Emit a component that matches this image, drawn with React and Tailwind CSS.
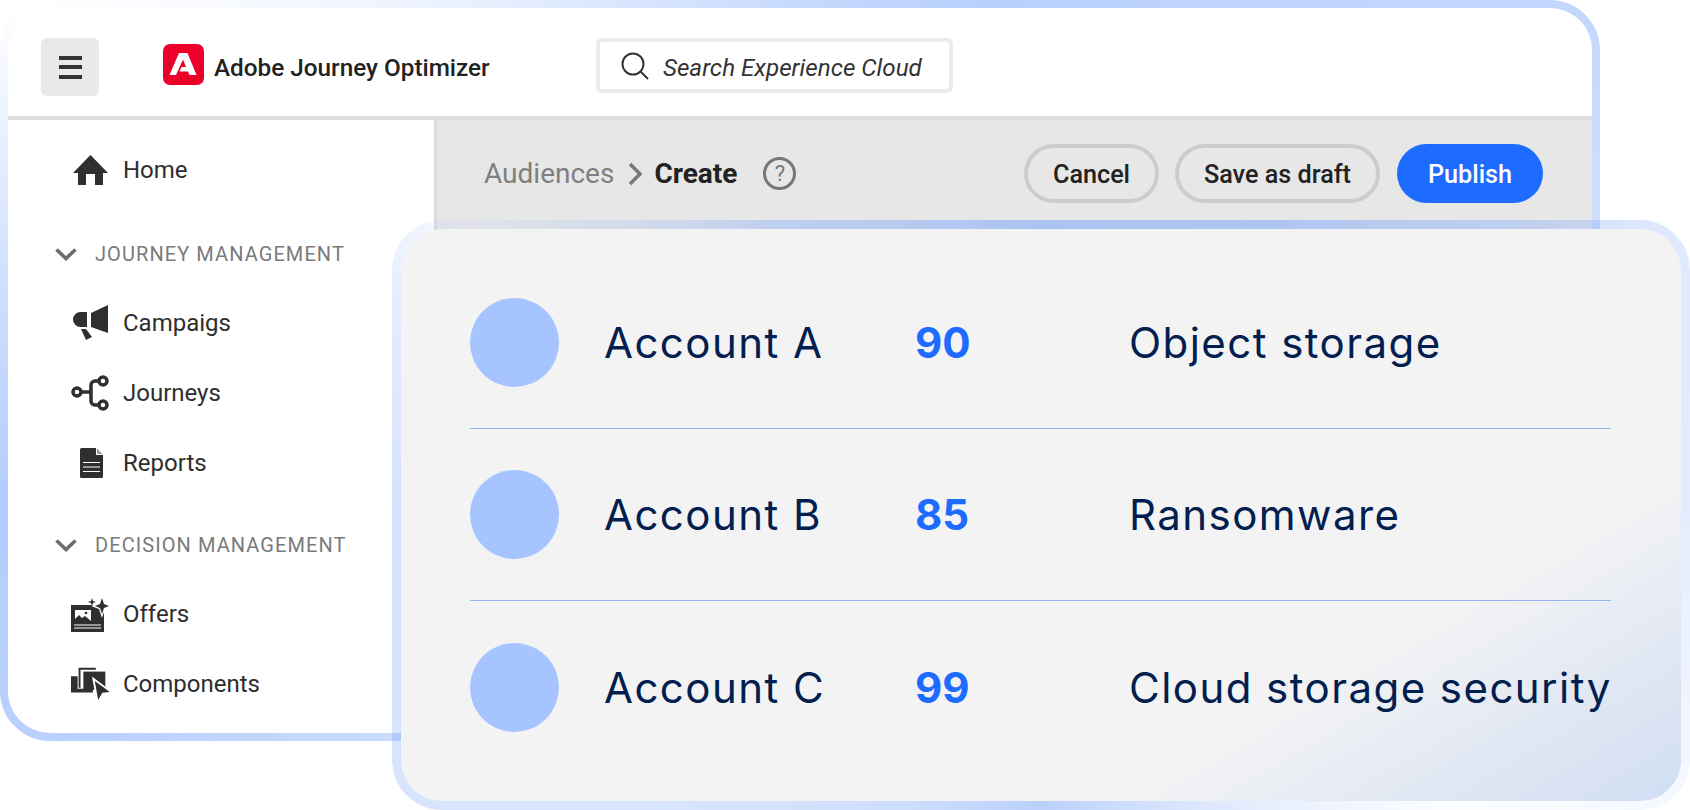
import React from "react";

const roboto = "font-['Roboto',sans-serif]";

const HomeIcon = () => (
  <svg width="36" height="30" viewBox="0 0 36 30" fill="#2f2f2f">
    <path d="M17.5 0L35 18H30V30H22V19H13V30H5V18H0Z" />
  </svg>
);

const CampaignIcon = () => (
  <svg width="38" height="38" viewBox="0 0 38 38" fill="#2f2f2f">
    <path d="M15 8H8.5A7.5 7.5 0 0 0 8.5 23H15Z" />
    <path d="M19 9L36 1V29L19 23Z" />
    <path d="M9 25H14L20 33L14 36Z" />
  </svg>
);

const JourneyIcon = () => (
  <svg width="40" height="38" viewBox="0 0 40 38" fill="none" stroke="#2f2f2f" strokeWidth="3.5">
    <circle cx="6" cy="18" r="4" />
    <circle cx="32" cy="7" r="4" />
    <circle cx="32" cy="31" r="4" />
    <path d="M10 18H20M28 7H24a4 4 0 0 0-4 4V27a4 4 0 0 0 4 4H28" />
  </svg>
);

const ReportIcon = () => (
  <svg width="23" height="30" viewBox="0 0 23 30">
    <path fill="#2f2f2f" d="M1.5 0H16V7H23V28.5A1.5 1.5 0 0 1 21.5 30H1.5A1.5 1.5 0 0 1 0 28.5V1.5A1.5 1.5 0 0 1 1.5 0Z" />
    <path fill="#9a9a9a" d="M17 0.5L22.5 6H17Z" />
    <path stroke="#fff" strokeWidth="1.2" d="M3 14.5H20M3 19H20M3 23.5H20" />
  </svg>
);

const OfferIcon = () => (
  <svg width="42" height="38" viewBox="0 0 42 38">
    <rect x="1" y="10" width="33" height="27" fill="#2f2f2f" />
    <rect x="5" y="15" width="16" height="12" fill="#fff" />
    <path fill="#2f2f2f" d="M5 27V24L9 20L12 23L15 21L21 26V27Z" />
    <circle cx="16" cy="18" r="1.3" fill="#2f2f2f" />
    <path stroke="#fff" strokeWidth="1.2" d="M4 30H31M4 33H31" />
    <path fill="#fff" d="M32 0L35 8L42 11L35 14L32 23L29 14L21 11L29 8Z" />
    <path fill="#2f2f2f" d="M32 3L34 9L39 11L34 13L32 19L30 13L25 11L30 9Z" />
    <path fill="#2f2f2f" d="M22 3L23 6L26 7L23 8L22 11L21 8L18 7L21 6Z" />
  </svg>
);

const ComponentIcon = () => (
  <svg width="44" height="38" viewBox="0 0 44 38">
    <path fill="#2f2f2f" d="M1 11H8V24H24V28H1Z" />
    <path fill="none" stroke="#2f2f2f" strokeWidth="2" d="M10 23V3H27" />
    <rect x="14" y="6" width="23" height="19" fill="#2f2f2f" />
    <path fill="#2f2f2f" stroke="#fff" strokeWidth="2" d="M24.5 13.5L44 28L34.5 29L29 38.5Z" />
  </svg>
);

const SectionChevron = () => (
  <svg width="22" height="13" viewBox="0 0 22 13" fill="none" stroke="#6e6e6e" strokeWidth="3.6">
    <path d="M1.5 1.5L11 10.5L20.5 1.5" />
  </svg>
);

const AdobeLogo = () => (
  <svg width="41" height="41" viewBox="0 0 41 41">
    <rect width="41" height="41" rx="7" fill="#eb0029" />
    <path fill="#fff" d="M16 9L6.5 31H13L20 15.5L23 23H18.5L16.5 27.5H25L26.5 31H33.5L24.5 9Z" />
  </svg>
);

const navGroups = [
  {
    title: "JOURNEY MANAGEMENT",
    headClass: "mt-[18px]",
    listClass: "mt-[17px]",
    items: [
      { label: "Campaigs", icon: <CampaignIcon /> },
      { label: "Journeys", icon: <JourneyIcon /> },
      { label: "Reports", icon: <ReportIcon /> },
    ],
  },
  {
    title: "DECISION MANAGEMENT",
    headClass: "mt-[30px]",
    listClass: "mt-[17px]",
    items: [
      { label: "Offers", icon: <OfferIcon /> },
      { label: "Components", icon: <ComponentIcon /> },
    ],
  },
];

const accounts = [
  { name: "Account A", score: 90, topic: "Object storage" },
  { name: "Account B", score: 85, topic: "Ransomware" },
  { name: "Account C", score: 99, topic: "Cloud storage security" },
];

const NavRow = ({ icon, label, className = "h-[70px]" }) => (
  <div className={`flex items-center pl-[62px] ${className}`}>
    <div className="flex w-[42px] justify-center">{icon}</div>
    <span className="ml-[11px] text-[24px] text-[#2e2e2e]">{label}</span>
  </div>
);

const Sidebar = () => (
  <aside className="w-[429px] shrink-0 border-r-[3px] border-[#dddddd] bg-white">
    <NavRow icon={<HomeIcon />} label="Home" className="h-[99px]" />
    {navGroups.map((group) => (
      <div key={group.title}>
        <div className={`flex h-[34px] items-center pl-[47px] ${group.headClass}`}>
          <SectionChevron />
          <span className="ml-[18px] text-[20px] tracking-[1.08px] text-[#7a7a7a]">{group.title}</span>
        </div>
        <div className={group.listClass}>
          {group.items.map((item) => (
            <NavRow key={item.label} icon={item.icon} label={item.label} />
          ))}
        </div>
      </div>
    ))}
  </aside>
);

// runs under the floating card so the card's see-through border picks up the grey
const Toolbar = () => (
  <div className="flex h-[120px] items-start justify-between bg-[#e7e7e7] pl-[47px] pr-[49px] pt-[24px]">
    <div className="flex h-[59px] items-center">
      <span className="text-[28px] text-[#7f7f7f]">Audiences</span>
      <svg className="ml-[14px]" width="14" height="24" viewBox="0 0 14 24" fill="none" stroke="#777777" strokeWidth="3.4">
        <path d="M2 2L12 12L2 22" />
      </svg>
      <span className="ml-[12px] text-[28px] font-bold text-[#222222]">Create</span>
      <div className="ml-[26px] flex h-[33px] w-[33px] items-center justify-center rounded-full border-[3px] border-[#777777] text-[22px] leading-none text-[#777777]">
        ?
      </div>
    </div>
    <div className="flex items-center">
      <button className="h-[59px] w-[135px] rounded-full border-4 border-[#cccccc] pt-[2px] text-[25.2px] font-medium text-[#222222]">
        Cancel
      </button>
      <button className="ml-[16px] h-[59px] w-[205px] rounded-full border-4 border-[#cccccc] pt-[2px] text-[25.2px] font-medium text-[#222222]">
        Save as draft
      </button>
      <button className="ml-[17px] h-[59px] w-[146px] rounded-full bg-[#1e6cff] pt-[2px] text-[25.2px] font-medium text-white">
        Publish
      </button>
    </div>
  </div>
);

const AccountRow = ({ account, last }) => (
  <div className={`flex h-[172px] items-center ${last ? "" : "border-b border-[#94b6f5]"}`}>
    <div className="h-[89px] w-[89px] shrink-0 rounded-full bg-[#a6c4ff]" />
    <span className="ml-[45px] w-[311px] shrink-0 text-[42px] tracking-[1.45px] text-[#02204f]">{account.name}</span>
    <span className="w-[214px] shrink-0 text-[42px] font-bold text-[#1e6cff]">{account.score}</span>
    <span className="whitespace-nowrap text-[42px] tracking-[1.45px] text-[#02204f]">{account.topic}</span>
  </div>
);

export default function App() {
  return (
    <div className={`relative h-[810px] w-[1690px] overflow-hidden bg-white ${roboto}`}>
      <div className="h-[741px] w-[1600px] rounded-[50px] bg-[conic-gradient(#c6d9fd_0deg,#b8d0fc_28deg,#c3d7fd_65deg,#d8e5fe_90deg,#d8e5fe_180deg,#d3e1fe_220deg,#bad1fd_243deg,#b4cdff_261deg,#d0e0ff_277deg,#ffffff_295deg,#f5f8ff_305deg,#dbe7fe_332deg,#c6d9fd_360deg)] p-2">
        <div className="h-full overflow-hidden rounded-[42px] bg-white">
          <header className="flex h-[112px] items-start border-b-4 border-[#dddddd] pl-[33px] pt-[30px]">
            <button className="flex h-[58px] w-[58px] flex-col items-center justify-center gap-[5.5px] rounded-md bg-[#e9e9e9]">
              <span className="h-[4px] w-[23px] bg-[#333333]" />
              <span className="h-[4px] w-[23px] bg-[#333333]" />
              <span className="h-[4px] w-[23px] bg-[#333333]" />
            </button>
            <div className="ml-[64px] flex w-[433px] items-center pt-[5px]">
              <AdobeLogo />
              <span className="ml-[10px] pt-[7px] text-[24.3px] font-medium text-[#222222]">Adobe Journey Optimizer</span>
            </div>
            <div className="flex h-[55px] w-[357px] items-center rounded-md border-4 border-[#ebebeb] pl-[21px]">
              <svg width="28" height="28" viewBox="0 0 28 28" fill="none" stroke="#333333" strokeWidth="2">
                <circle cx="12" cy="12" r="10.5" />
                <path d="M19.5 19.5L27 27" />
              </svg>
              <span className="ml-[14px] pt-[6px] text-[24.2px] italic text-[#333333]">Search Experience Cloud</span>
            </div>
          </header>
          <div className="flex">
            <Sidebar />
            <div className="flex-1">
              <Toolbar />
            </div>
          </div>
        </div>
      </div>

      <div className="absolute left-[392px] top-[220px] h-[590px] w-[1298px] rounded-[50px] bg-[conic-gradient(rgba(130,170,250,.6)_0deg,rgba(130,170,250,.55)_40deg,rgba(130,170,250,.4)_58deg,rgba(130,170,250,.25)_66deg,rgba(130,170,250,.22)_90deg,rgba(130,170,250,.02)_125deg,rgba(130,170,250,.15)_137deg,rgba(130,170,250,.55)_180deg,rgba(130,170,250,.4)_205deg,rgba(130,170,250,.3)_235deg,rgba(130,170,250,.34)_270deg,rgba(130,170,250,.2)_290deg,rgba(130,170,250,.08)_297deg,rgba(130,170,250,.4)_318deg,rgba(130,170,250,.6)_360deg)] p-[9px]">
        <div className="h-full rounded-[41px] bg-[linear-gradient(150deg,#f3f3f3_0%,#f3f3f4_75%,#d0ddf2_100%)] pl-[69px] pr-[70px] pt-[28px] font-['Inter',sans-serif]">
          {accounts.map((account, i) => (
            <AccountRow key={account.name} account={account} last={i === accounts.length - 1} />
          ))}
        </div>
      </div>
    </div>
  );
}
